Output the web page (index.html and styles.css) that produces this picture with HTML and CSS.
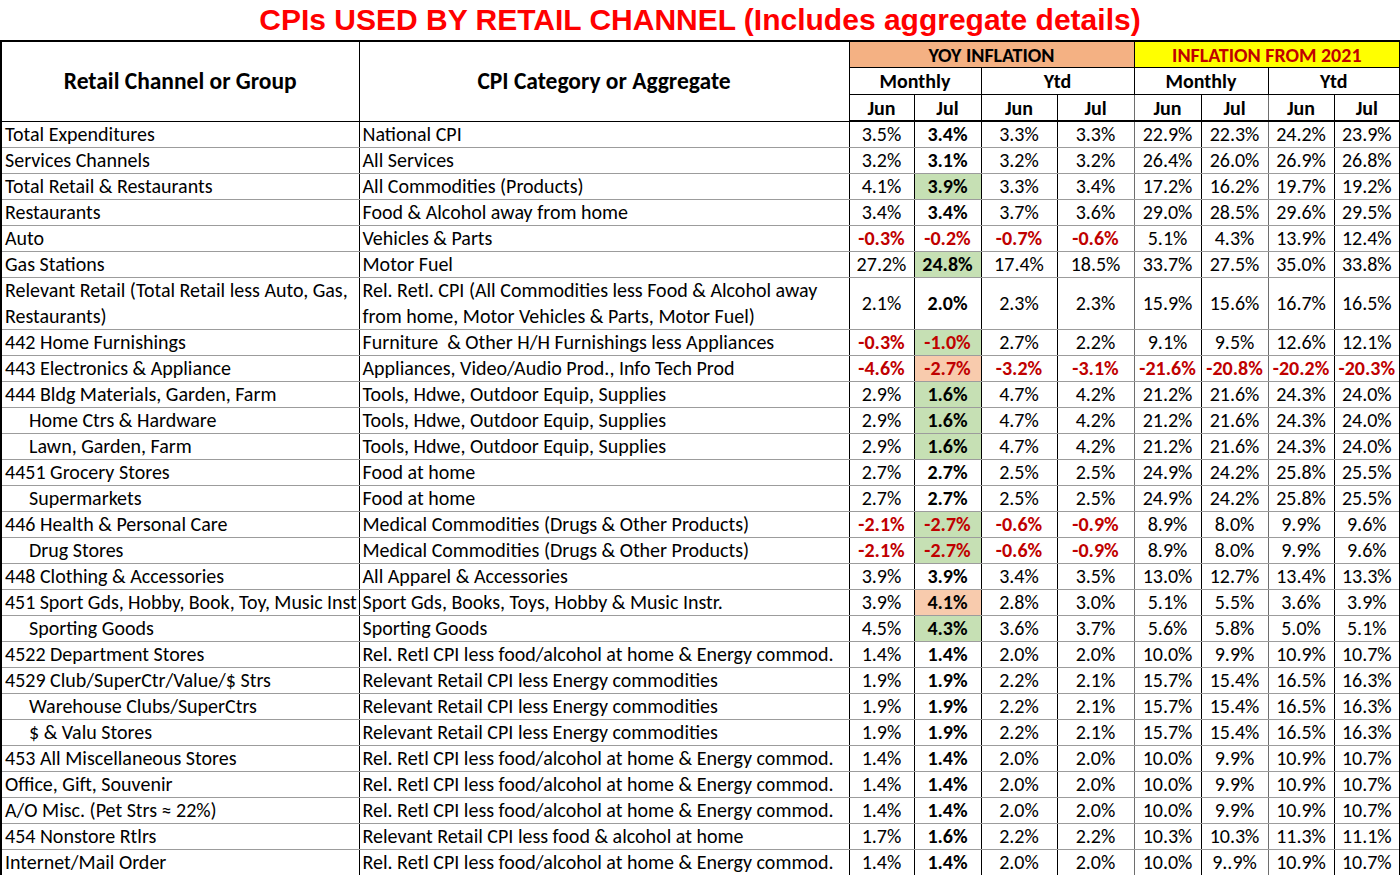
FILE: index.html
```html
<!DOCTYPE html>
<html>
<head>
<meta charset="utf-8">
<link rel="stylesheet" href="styles.css">
</head>
<body>
<h1 class="title">CPIs USED BY RETAIL CHANNEL (Includes aggregate details)</h1>
<table class="cpi">
<colgroup>
<col class="c-chan"><col class="c-cat">
<col class="c-a"><col class="c-b"><col class="c-c"><col class="c-d">
<col class="c-e"><col class="c-f"><col class="c-g"><col class="c-h">
</colgroup>
<thead>
<tr class="h1">
<th rowspan="3" class="big">Retail Channel or Group</th>
<th rowspan="3" class="big">CPI Category or Aggregate</th>
<th colspan="4" class="yoy">YOY INFLATION</th>
<th colspan="4" class="since">INFLATION FROM 2021</th>
</tr>
<tr class="h2">
<th colspan="2">Monthly</th><th colspan="2">Ytd</th>
<th colspan="2" class="redl">Monthly</th><th colspan="2">Ytd</th>
</tr>
<tr class="h3">
<th>Jun</th><th>Jul</th><th>Jun</th><th class="gr">Jul</th>
<th class="redl">Jun</th><th class="gr">Jul</th><th>Jun</th><th class="gr">Jul</th>
</tr>
</thead>
<tbody>
<tr><td>Total Expenditures</td><td>National CPI</td><td class="n">3.5%</td><td class="n b">3.4%</td><td class="n">3.3%</td><td class="n gr">3.3%</td><td class="n redl">22.9%</td><td class="n gr">22.3%</td><td class="n">24.2%</td><td class="n gr">23.9%</td></tr>
<tr><td>Services Channels</td><td>All Services</td><td class="n">3.2%</td><td class="n b">3.1%</td><td class="n">3.2%</td><td class="n gr">3.2%</td><td class="n redl">26.4%</td><td class="n gr">26.0%</td><td class="n">26.9%</td><td class="n gr">26.8%</td></tr>
<tr><td>Total Retail &amp; Restaurants</td><td>All Commodities (Products)</td><td class="n">4.1%</td><td class="n b g">3.9%</td><td class="n">3.3%</td><td class="n gr">3.4%</td><td class="n redl">17.2%</td><td class="n gr">16.2%</td><td class="n">19.7%</td><td class="n gr">19.2%</td></tr>
<tr><td>Restaurants</td><td>Food &amp; Alcohol away from home</td><td class="n">3.4%</td><td class="n b">3.4%</td><td class="n">3.7%</td><td class="n gr">3.6%</td><td class="n redl">29.0%</td><td class="n gr">28.5%</td><td class="n">29.6%</td><td class="n gr">29.5%</td></tr>
<tr><td>Auto</td><td>Vehicles &amp; Parts</td><td class="n r">-0.3%</td><td class="n b r">-0.2%</td><td class="n r">-0.7%</td><td class="n r gr">-0.6%</td><td class="n redl">5.1%</td><td class="n gr">4.3%</td><td class="n">13.9%</td><td class="n gr">12.4%</td></tr>
<tr><td>Gas Stations</td><td>Motor Fuel</td><td class="n">27.2%</td><td class="n b g">24.8%</td><td class="n">17.4%</td><td class="n gr">18.5%</td><td class="n redl">33.7%</td><td class="n gr">27.5%</td><td class="n">35.0%</td><td class="n gr">33.8%</td></tr>
<tr class="two"><td>Relevant Retail (Total Retail less Auto, Gas, Restaurants)</td><td>Rel. Retl. CPI (All Commodities less Food &amp; Alcohol away from home, Motor Vehicles &amp; Parts, Motor Fuel)</td><td class="n">2.1%</td><td class="n b">2.0%</td><td class="n">2.3%</td><td class="n gr">2.3%</td><td class="n redl">15.9%</td><td class="n gr">15.6%</td><td class="n">16.7%</td><td class="n gr">16.5%</td></tr>
<tr><td>442 Home Furnishings</td><td>Furniture &nbsp;&amp; Other H/H Furnishings less Appliances</td><td class="n r">-0.3%</td><td class="n b r g">-1.0%</td><td class="n">2.7%</td><td class="n gr">2.2%</td><td class="n redl">9.1%</td><td class="n gr">9.5%</td><td class="n">12.6%</td><td class="n gr">12.1%</td></tr>
<tr><td>443 Electronics &amp; Appliance</td><td>Appliances, Video/Audio Prod., Info Tech Prod</td><td class="n r">-4.6%</td><td class="n b r o">-2.7%</td><td class="n r">-3.2%</td><td class="n r gr">-3.1%</td><td class="n r redl">-21.6%</td><td class="n r gr">-20.8%</td><td class="n r">-20.2%</td><td class="n r gr">-20.3%</td></tr>
<tr><td>444 Bldg Materials, Garden, Farm</td><td>Tools, Hdwe, Outdoor Equip, Supplies</td><td class="n">2.9%</td><td class="n b g">1.6%</td><td class="n">4.7%</td><td class="n gr">4.2%</td><td class="n redl">21.2%</td><td class="n gr">21.6%</td><td class="n">24.3%</td><td class="n gr">24.0%</td></tr>
<tr><td class="ind">Home Ctrs &amp; Hardware</td><td>Tools, Hdwe, Outdoor Equip, Supplies</td><td class="n">2.9%</td><td class="n b g">1.6%</td><td class="n">4.7%</td><td class="n gr">4.2%</td><td class="n redl">21.2%</td><td class="n gr">21.6%</td><td class="n">24.3%</td><td class="n gr">24.0%</td></tr>
<tr><td class="ind">Lawn, Garden, Farm</td><td>Tools, Hdwe, Outdoor Equip, Supplies</td><td class="n">2.9%</td><td class="n b g">1.6%</td><td class="n">4.7%</td><td class="n gr">4.2%</td><td class="n redl">21.2%</td><td class="n gr">21.6%</td><td class="n">24.3%</td><td class="n gr">24.0%</td></tr>
<tr><td>4451 Grocery Stores</td><td>Food at home</td><td class="n">2.7%</td><td class="n b">2.7%</td><td class="n">2.5%</td><td class="n gr">2.5%</td><td class="n redl">24.9%</td><td class="n gr">24.2%</td><td class="n">25.8%</td><td class="n gr">25.5%</td></tr>
<tr><td class="ind">Supermarkets</td><td>Food at home</td><td class="n">2.7%</td><td class="n b">2.7%</td><td class="n">2.5%</td><td class="n gr">2.5%</td><td class="n redl">24.9%</td><td class="n gr">24.2%</td><td class="n">25.8%</td><td class="n gr">25.5%</td></tr>
<tr><td>446 Health &amp; Personal Care</td><td>Medical Commodities (Drugs &amp; Other Products)</td><td class="n r">-2.1%</td><td class="n b r g">-2.7%</td><td class="n r">-0.6%</td><td class="n r gr">-0.9%</td><td class="n redl">8.9%</td><td class="n gr">8.0%</td><td class="n">9.9%</td><td class="n gr">9.6%</td></tr>
<tr><td class="ind">Drug Stores</td><td>Medical Commodities (Drugs &amp; Other Products)</td><td class="n r">-2.1%</td><td class="n b r g">-2.7%</td><td class="n r">-0.6%</td><td class="n r gr">-0.9%</td><td class="n redl">8.9%</td><td class="n gr">8.0%</td><td class="n">9.9%</td><td class="n gr">9.6%</td></tr>
<tr><td>448 Clothing &amp; Accessories</td><td>All Apparel &amp; Accessories</td><td class="n">3.9%</td><td class="n b">3.9%</td><td class="n">3.4%</td><td class="n gr">3.5%</td><td class="n redl">13.0%</td><td class="n gr">12.7%</td><td class="n">13.4%</td><td class="n gr">13.3%</td></tr>
<tr><td class="tight">451 Sport Gds, Hobby, Book, Toy, Music Inst</td><td>Sport Gds, Books, Toys, Hobby &amp; Music Instr.</td><td class="n">3.9%</td><td class="n b o">4.1%</td><td class="n">2.8%</td><td class="n gr">3.0%</td><td class="n redl">5.1%</td><td class="n gr">5.5%</td><td class="n">3.6%</td><td class="n gr">3.9%</td></tr>
<tr><td class="ind">Sporting Goods</td><td>Sporting Goods</td><td class="n">4.5%</td><td class="n b g">4.3%</td><td class="n">3.6%</td><td class="n gr">3.7%</td><td class="n redl">5.6%</td><td class="n gr">5.8%</td><td class="n">5.0%</td><td class="n gr">5.1%</td></tr>
<tr><td>4522 Department Stores</td><td>Rel. Retl CPI less food/alcohol at home &amp; Energy commod.</td><td class="n">1.4%</td><td class="n b">1.4%</td><td class="n">2.0%</td><td class="n gr">2.0%</td><td class="n redl">10.0%</td><td class="n gr">9.9%</td><td class="n">10.9%</td><td class="n gr">10.7%</td></tr>
<tr><td>4529 Club/SuperCtr/Value/$ Strs</td><td>Relevant Retail CPI less Energy commodities</td><td class="n">1.9%</td><td class="n b">1.9%</td><td class="n">2.2%</td><td class="n gr">2.1%</td><td class="n redl">15.7%</td><td class="n gr">15.4%</td><td class="n">16.5%</td><td class="n gr">16.3%</td></tr>
<tr><td class="ind">Warehouse Clubs/SuperCtrs</td><td>Relevant Retail CPI less Energy commodities</td><td class="n">1.9%</td><td class="n b">1.9%</td><td class="n">2.2%</td><td class="n gr">2.1%</td><td class="n redl">15.7%</td><td class="n gr">15.4%</td><td class="n">16.5%</td><td class="n gr">16.3%</td></tr>
<tr><td class="ind">$ &amp; Valu Stores</td><td>Relevant Retail CPI less Energy commodities</td><td class="n">1.9%</td><td class="n b">1.9%</td><td class="n">2.2%</td><td class="n gr">2.1%</td><td class="n redl">15.7%</td><td class="n gr">15.4%</td><td class="n">16.5%</td><td class="n gr">16.3%</td></tr>
<tr><td>453 All Miscellaneous Stores</td><td>Rel. Retl CPI less food/alcohol at home &amp; Energy commod.</td><td class="n">1.4%</td><td class="n b">1.4%</td><td class="n">2.0%</td><td class="n gr">2.0%</td><td class="n redl">10.0%</td><td class="n gr">9.9%</td><td class="n">10.9%</td><td class="n gr">10.7%</td></tr>
<tr><td>Office, Gift, Souvenir</td><td>Rel. Retl CPI less food/alcohol at home &amp; Energy commod.</td><td class="n">1.4%</td><td class="n b">1.4%</td><td class="n">2.0%</td><td class="n gr">2.0%</td><td class="n redl">10.0%</td><td class="n gr">9.9%</td><td class="n">10.9%</td><td class="n gr">10.7%</td></tr>
<tr><td>A/O Misc. (Pet Strs ≈ 22%)</td><td>Rel. Retl CPI less food/alcohol at home &amp; Energy commod.</td><td class="n">1.4%</td><td class="n b">1.4%</td><td class="n">2.0%</td><td class="n gr">2.0%</td><td class="n redl">10.0%</td><td class="n gr">9.9%</td><td class="n">10.9%</td><td class="n gr">10.7%</td></tr>
<tr><td>454 Nonstore Rtlrs</td><td>Relevant Retail CPI less food &amp; alcohol at home</td><td class="n">1.7%</td><td class="n b">1.6%</td><td class="n">2.2%</td><td class="n gr">2.2%</td><td class="n redl">10.3%</td><td class="n gr">10.3%</td><td class="n">11.3%</td><td class="n gr">11.1%</td></tr>
<tr><td>Internet/Mail Order</td><td>Rel. Retl CPI less food/alcohol at home &amp; Energy commod.</td><td class="n">1.4%</td><td class="n b">1.4%</td><td class="n">2.0%</td><td class="n gr">2.0%</td><td class="n redl">10.0%</td><td class="n gr">9..9%</td><td class="n">10.9%</td><td class="n gr">10.7%</td></tr>
</tbody>
</table>
</body>
</html>
```
FILE: styles.css
```css
html, body {
  margin: 0;
  padding: 0;
  background: #ffffff;
}
.title {
  margin: 0;
  height: 40px;
  line-height: 40px;
  text-align: center;
  font-family: "Liberation Sans", Arial, sans-serif;
  font-weight: bold;
  font-size: 30px;
  color: #ff0000;
  white-space: nowrap;
}
.cpi {
  border-collapse: collapse;
  table-layout: fixed;
  width: 1400px;
  font-family: Carlito, "Liberation Sans Narrow", "Noto Sans", sans-serif;
  font-size: 20px;
  color: #000;
  border: 2px solid #000;
}
.c-chan { width: 358px; }
.c-cat { width: 490px; }
.c-a { width: 65px; }
.c-b { width: 67px; }
.c-c { width: 76px; }
.c-d { width: 77px; }
.c-e { width: 67px; }
.c-f { width: 67px; }
.c-g { width: 66px; }
.c-h { width: 66px; }

.cpi th {
  border: 1px solid #000;
  font-weight: bold;
  padding: 0;
  text-align: center;
  line-height: 24px;
  white-space: nowrap;
}
.cpi th.big { font-size: 23.5px; }
.h1 th { height: 25px; }
.h2 th { height: 26px; }
.h3 th { height: 25px; border-bottom: 2px solid #000; }
.yoy { background: #f4b183; }
.since { background: #ffff00; color: #c00000; }

.cpi td {
  padding: 0 3px;
  height: 25px;
  line-height: 25px;
  border-bottom: 1px solid #9c9c9c;
  border-right: 1px solid #000;
  white-space: nowrap;
  overflow: hidden;
}
.cpi tr.two td { white-space: normal; line-height: 25.5px; height: 51px; }
.cpi td.ind { padding-left: 27px; }
.cpi td.tight { padding-right: 0; letter-spacing: -0.05px; }
.cpi td.n { text-align: center; padding: 0; }
.cpi td.gr, .cpi th.gr { border-right-color: #6e6e6e; }
.cpi .redl { border-left: 1px solid #e00000; }
.cpi td.b { font-weight: bold; }
.cpi td.r { color: #c00000; font-weight: bold; }
.cpi td.g { background: #c6e0b4; }
.cpi td.o { background: #f8cbad; }
```
